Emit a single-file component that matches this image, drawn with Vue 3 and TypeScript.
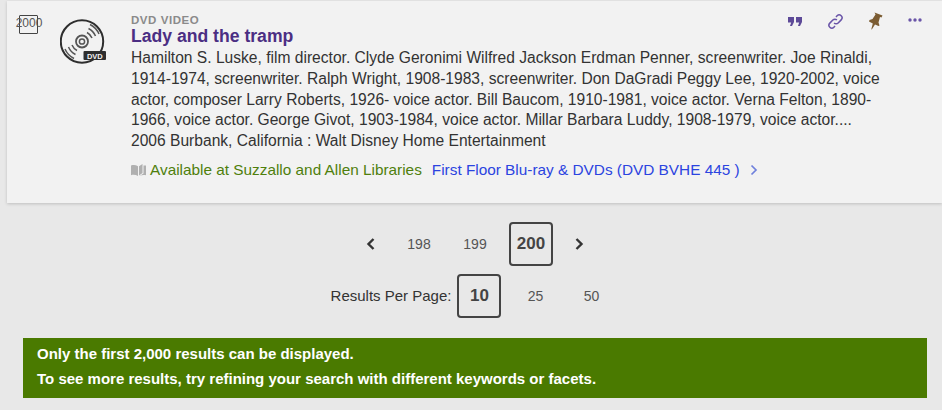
<script setup lang="ts">
const authors: string[] = [
  'Hamilton S. Luske, film director. Clyde Geronimi Wilfred Jackson Erdman Penner, screenwriter. Joe Rinaldi,',
  '1914-1974, screenwriter. Ralph Wright, 1908-1983, screenwriter. Don DaGradi Peggy Lee, 1920-2002, voice',
  'actor, composer Larry Roberts, 1926- voice actor. Bill Baucom, 1910-1981, voice actor. Verna Felton, 1890-',
  '1966, voice actor. George Givot, 1903-1984, voice actor. Millar Barbara Luddy, 1908-1979, voice actor....',
]
</script>

<template>
  <div class="page">
    <section class="card">
      <div class="select">
        <span class="box"></span>
        <span class="num">2000</span>
      </div>
      <svg class="disc" width="46" height="46" viewBox="0 0 46 46" fill="none">
        <circle cx="22" cy="22.5" r="21.200" stroke="#2e2e2e" stroke-width="2" />
        <circle cx="22" cy="22.5" r="6" stroke="#555" stroke-width="1.800" />
        <circle cx="22" cy="22.5" r="2.600" stroke="#555" stroke-width="1.500" />
        <path d="M27 13.500a11 11 0 0 1 5 5.500M28.500 9.500a15 15 0 0 1 7 7.500M30 5.500a19 19 0 0 1 9 9.500" stroke="#555" stroke-width="1.500" />
        <path d="M17 31.500a11 11 0 0 1-5-5.500M15.500 35.500a15 15 0 0 1-7-7.500M14 39.500a19 19 0 0 1-9-9.500" stroke="#555" stroke-width="1.500" />
        <rect x="23.500" y="32" width="22.500" height="9" rx="1" fill="#2e2e2e" />
        <text x="34.800" y="39.500" text-anchor="middle" class="badge">DVD</text>
      </svg>
      <div class="body">
        <div class="kind">DVD VIDEO</div>
        <h2 class="title">Lady and the tramp</h2>
        <p class="authors">
          <span v-for="line in authors" :key="line" class="line">{{ line }}</span>
          <span class="line">2006 Burbank, California : Walt Disney Home Entertainment</span>
        </p>
        <div class="avail">
          <svg class="book" width="15" height="12" viewBox="0 0 15 12">
            <path d="M0 1.500c2.500-.8 4.800-.6 7 .7V12C4.800 10.800 2.500 10.600 0 11.200z" fill="#b0b0b0" />
            <path d="M8 2.200 11.500 0v9L8 11.500z" fill="#b0b0b0" />
            <path d="M12.500 1.500H15v9.700c-2.400-.5-4.500-.3-6.500.8l4-2.500z" fill="#b0b0b0" />
          </svg>
          <span class="where">Available at Suzzallo and Allen Libraries</span>
          <span class="loc">First Floor Blu-ray &amp; DVDs (DVD BVHE 445 )</span>
          <svg class="more" width="8" height="12" viewBox="0 0 8 12" fill="none">
            <path d="M1.500 1.500 6 6l-4.500 4.500" stroke="#6f80dc" stroke-width="1.700" />
          </svg>
        </div>
      </div>
      <div class="actions">
        <svg class="i-quote" width="14" height="9" viewBox="0 0 14 9" fill="#5d4a98">
          <path d="M0 0h6v5L4 9H2l1.200-3.500H0zM8 0h6v5l-2 4h-2l1.200-3.500H8z" />
        </svg>
        <svg class="i-link" width="17" height="17" viewBox="0 0 18 18" fill="none" stroke="#6a55a8" stroke-width="1.600">
          <path d="M7.500 10.500a3 3 0 0 0 4.300 0l3.200-3.200a3 3 0 0 0-4.300-4.300L9.500 4.200" />
          <path d="M10.500 7.500a3 3 0 0 0-4.300 0L3 10.700A3 3 0 0 0 7.300 15l1.200-1.200" />
        </svg>
        <svg class="i-pin" width="14" height="18" viewBox="0 0 14 18" fill="#7b5c32">
          <path d="M5.500.5 13.500 3.500 12.500 5.500 11 5 9.500 10.500 10.500 13.500 9.500 14 6 12.500 2.800 17.500 2.300 17.200 3.800 11.500 0 9.500.5 8 3.500 7 6.500 2.500z" />
        </svg>
        <svg class="i-dots" width="14" height="4" viewBox="0 0 14 4" fill="#6a55a8">
          <circle cx="2" cy="2" r="1.700" />
          <circle cx="7" cy="2" r="1.700" />
          <circle cx="12" cy="2" r="1.700" />
        </svg>
      </div>
    </section>

    <nav class="pager">
      <svg class="arrow" width="10" height="12" viewBox="0 0 10 12" fill="none">
        <path d="M7.500 1 2.500 6l5 5" stroke="#333" stroke-width="2.400" />
      </svg>
      <span class="cell">198</span>
      <span class="cell">199</span>
      <span class="cell current">200</span>
      <svg class="arrow" width="10" height="12" viewBox="0 0 10 12" fill="none">
        <path d="M2.500 1l5 5-5 5" stroke="#333" stroke-width="2.400" />
      </svg>
    </nav>

    <div class="perpage">
      <span class="label">Results Per Page:</span>
      <span class="cell current">10</span>
      <span class="cell">25</span>
      <span class="cell">50</span>
    </div>

    <div class="notice">
      <p>Only the first 2,000 results can be displayed.</p>
      <p>To see more results, try refining your search with different keywords or facets.</p>
    </div>
  </div>
</template>

<style>
html, body { margin: 0; background: #e8e8e8; }
</style>

<style scoped>
.page {
  width: 942px;
  height: 410px;
  overflow: hidden;
  font-family: "Liberation Sans", Arial, sans-serif;
  background: #e8e8e8;
  padding-top: 1px;
  box-sizing: border-box;
}
.card {
  margin-left: 7px;
  height: 202px;
  background: #f2f2f2;
  box-shadow: 0 1px 3px rgba(0, 0, 0, 0.18);
  display: flex;
  position: relative;
  box-sizing: border-box;
  padding: 14px 0 0 12px;
}
.select { width: 20px; position: relative; flex: none; }
.box {
  display: block;
  box-sizing: border-box;
  width: 19px;
  height: 19px;
  border: 1px solid #444;
  border-radius: 1px;
}
.num {
  position: absolute;
  left: -6px;
  width: 32px;
  top: 1px;
  text-align: center;
  font-size: 12px;
  line-height: 14px;
  color: #555;
}
.disc { flex: none; margin: 4px 0 0 21px; }
.badge {
  font-family: "Liberation Sans", Arial, sans-serif;
  font-size: 7.500px;
  font-weight: 700;
  fill: #f2f2f2;
}
.body { margin-left: 25px; }
.kind {
  font-size: 11.500px;
  line-height: 11px;
  font-weight: 700;
  letter-spacing: 0.55px;
  color: #8a8a8a;
}
.title {
  margin: 0;
  font-size: 17.600px;
  line-height: 21px;
  font-weight: 700;
  color: #4b2e83;
}
.authors {
  margin: 1px 0 0;
  font-size: 15.600px;
  line-height: 20.800px;
  color: #333;
}
.line { display: block; white-space: nowrap; }
.avail {
  display: flex;
  align-items: center;
  margin-top: 8px;
  font-size: 15.350px;
  line-height: 20px;
}
.book { margin-right: 4px; }
.where { color: #4f7f0c; }
.loc { color: #2b44e0; margin-left: 10px; }
.more { margin-left: 10px; }
.actions {
  position: absolute;
  top: 11px;
  right: 20px;
  display: flex;
  align-items: center;
}
.i-link { margin-left: 25px; }
.i-pin { margin-left: 25px; }
.i-dots { margin-left: 25px; margin-top: -3px; }
.pager, .perpage {
  display: flex;
  align-items: center;
  justify-content: center;
  padding-left: 8px;
}
.pager { margin-top: 19px; }
.cell {
  width: 44px;
  height: 44px;
  box-sizing: border-box;
  display: flex;
  align-items: center;
  justify-content: center;
  font-size: 14px;
  color: #555;
  margin: 0 6px;
}
.current {
  border: 2px solid #444;
  border-radius: 4px;
  font-size: 17px;
  font-weight: 700;
  color: #444;
}
.arrow { margin: 0 15px; }
.perpage { margin-top: 8px; }
.label { font-size: 15px; color: #333; padding-bottom: 2px; }
.notice {
  margin: 20px 15px 0 23px;
  height: 60px;
  box-sizing: border-box;
  background: #4a7a00;
  color: #fff;
  font-size: 15px;
  font-weight: 700;
  padding: 3px 14px;
}
.notice p { margin: 0; line-height: 25px; }
</style>
